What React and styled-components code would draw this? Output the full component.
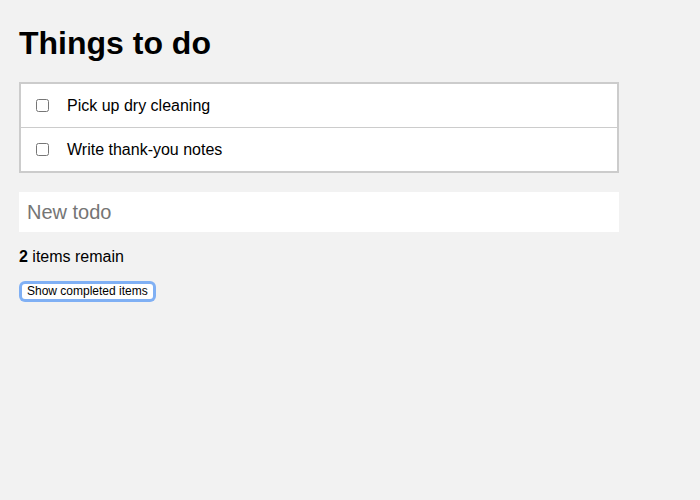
import styled, { createGlobalStyle } from "styled-components";

const GlobalStyle = createGlobalStyle`
  body {
    margin: 0;
    background: #f2f2f2;
    font-family: "Liberation Sans", Arial, sans-serif;
    color: #000;
  }
`;

const todos = [
  { id: 1, text: "Pick up dry cleaning" },
  { id: 2, text: "Write thank-you notes" },
];

const App = () => {
  return (
    <Wrapper>
      <GlobalStyle />
      <Title>Things to do</Title>
      <List>
        {todos.map((todo) => (
          <Row key={todo.id}>
            <Check type="checkbox" />
            <Label>{todo.text}</Label>
          </Row>
        ))}
      </List>
      <NewTodo placeholder="New todo" />
      <Remaining>
        <b>2</b> items remain
      </Remaining>
      <ToggleButton>Show completed items</ToggleButton>
    </Wrapper>
  );
};

const Wrapper = styled.div`
  padding: 25px 19px;
  width: 600px;
`;

const Title = styled.h1`
  margin: 0 0 20px;
  font-size: 32px;
  line-height: 37px;
  font-weight: bold;
`;

const List = styled.ul`
  list-style: none;
  margin: 0;
  padding: 0;
  background: #fff;
  border: 2px solid #cccccc;
`;

const Row = styled.li`
  display: flex;
  align-items: center;
  gap: 18px;
  height: 43px;
  padding-left: 15px;
  border-top: 1px solid #cccccc;

  &:first-child {
    border-top: none;
  }
`;

const Check = styled.input`
  width: 13px;
  height: 13px;
  margin: 0;
`;

const Label = styled.span`
  font-size: 16px;
`;

const NewTodo = styled.input`
  display: block;
  box-sizing: border-box;
  width: 100%;
  height: 40px;
  margin-top: 19px;
  padding: 0 8px;
  border: none;
  background: #fff;
  font-family: "Liberation Sans", Arial, sans-serif;
  font-size: 20px;
  outline: none;

  &::placeholder {
    color: #757575;
  }
`;

const Remaining = styled.div`
  margin-top: 16px;
  font-size: 16px;
  line-height: 18px;
`;

const ToggleButton = styled.button`
  display: block;
  box-sizing: border-box;
  margin: 18px 0 0 3px;
  height: 15px;
  padding: 0 5px;
  background: #fff;
  border: none;
  border-radius: 3px;
  box-shadow: 0 0 0 3px #80b0f4;
  font-family: "Liberation Sans", Arial, sans-serif;
  font-size: 12px;
  line-height: 15px;
  color: #000;
`;

export default App;
